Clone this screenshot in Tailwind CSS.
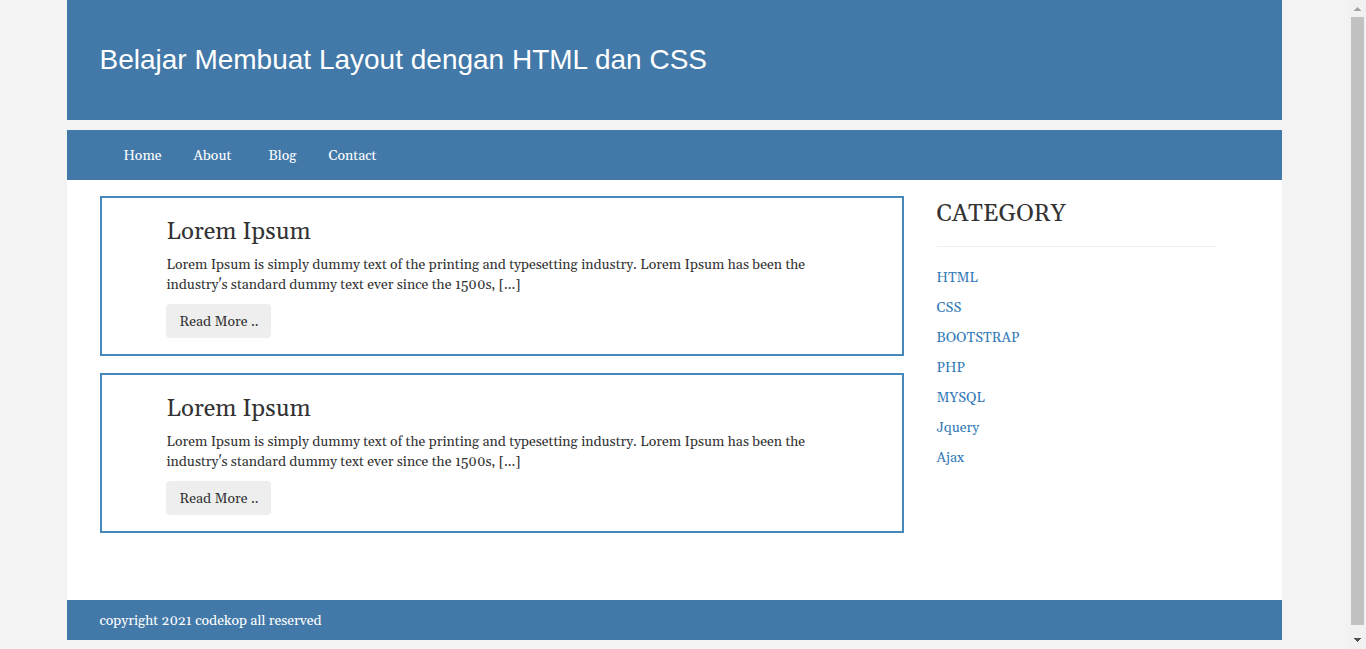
<!DOCTYPE html>
<html lang="id">
<head>
<meta charset="utf-8">
<meta name="viewport" content="width=device-width, initial-scale=1">
<title>Belajar Membuat Layout dengan HTML dan CSS</title>
<script src="https://cdn.jsdelivr.net/npm/@tailwindcss/browser@4"></script>
</head>
<body class="flex min-h-screen bg-[#f3f3f3] font-[Georgia,Gelasio,'Liberation_Serif',serif] text-sm leading-5 text-[#333333]">
<div class="min-w-0 flex-1">
  <div class="mx-auto w-[90%]">
    <header class="mb-2.5 flex h-30 items-center bg-[#4279a8] px-8">
      <h1 class="font-['Liberation_Sans',Arial,sans-serif] text-[28px] leading-8 text-white">Belajar Membuat Layout dengan HTML dan CSS</h1>
    </header>
    <nav class="flex h-12.5 items-center bg-[#4279a8] px-10 pt-0.5 text-center text-white">
      <a href="#" class="w-17.5">Home</a>
      <a href="#" class="w-17.5">About</a>
      <a href="#" class="w-17.5">Blog</a>
      <a href="#" class="w-17.5">Contact</a>
    </nav>
    <div class="flex min-h-105 gap-[33px] bg-white pl-[33px] pr-[65px]">
      <main class="flex min-w-0 flex-1 flex-col gap-[17px] py-4">
        <article class="border-2 border-[#4588ba] px-16 pt-[21px] pb-4">
          <h2 class="mb-2.5 text-2xl leading-[26px]">Lorem Ipsum</h2>
          <p class="mb-[9px]">Lorem Ipsum is simply dummy text of the printing and typesetting industry. Lorem Ipsum has been the industry's standard dummy text ever since the 1500s, [...]</p>
          <button type="button" class="block rounded bg-[#eeeeee] px-[13px] pt-2 pb-1.5">Read More ..</button>
        </article>
        <article class="border-2 border-[#4588ba] px-16 pt-[21px] pb-4">
          <h2 class="mb-2.5 text-2xl leading-[26px]">Lorem Ipsum</h2>
          <p class="mb-[9px]">Lorem Ipsum is simply dummy text of the printing and typesetting industry. Lorem Ipsum has been the industry's standard dummy text ever since the 1500s, [...]</p>
          <button type="button" class="block rounded bg-[#eeeeee] px-[13px] pt-2 pb-1.5">Read More ..</button>
        </article>
      </main>
      <aside class="w-[280px] shrink-0 pt-[21px]">
        <h2 class="text-2xl leading-[26px]">CATEGORY</h2>
        <hr class="mt-[19px] mb-[21px] border-[#eeeeee]">
        <ul class="flex flex-col gap-2.5 text-[#337ab7]">
          <li><a href="#">HTML</a></li>
          <li><a href="#">CSS</a></li>
          <li><a href="#">BOOTSTRAP</a></li>
          <li><a href="#">PHP</a></li>
          <li><a href="#">MYSQL</a></li>
          <li><a href="#">Jquery</a></li>
          <li><a href="#">Ajax</a></li>
        </ul>
      </aside>
    </div>
    <footer class="flex h-10 items-center bg-[#4279a8] px-8 pt-0.5 text-white">copyright 2021 codekop all reserved</footer>
  </div>
</div>
<!-- Scroll track -->
<div class="flex w-[17px] shrink-0 flex-col items-center bg-[#f1f1f1]" aria-hidden="true">
  <svg class="h-[17px] w-[17px]" viewBox="0 0 17 17" shape-rendering="crispEdges"><path d="M8 7h1v1h1v1h1v1h1v1H5v-1h1V9h1V8h1z" fill="#a3a3a3"/></svg>
  <div class="w-[13px] flex-1 bg-[#c1c1c1]"></div>
  <svg class="mt-[7px] h-[17px] w-[17px]" viewBox="0 0 17 17" shape-rendering="crispEdges"><path d="M5 6h7v1h-1v1h-1v1H9v1H8V9H7V8H6V7H5z" fill="#505050"/></svg>
</div>
</body>
</html>
